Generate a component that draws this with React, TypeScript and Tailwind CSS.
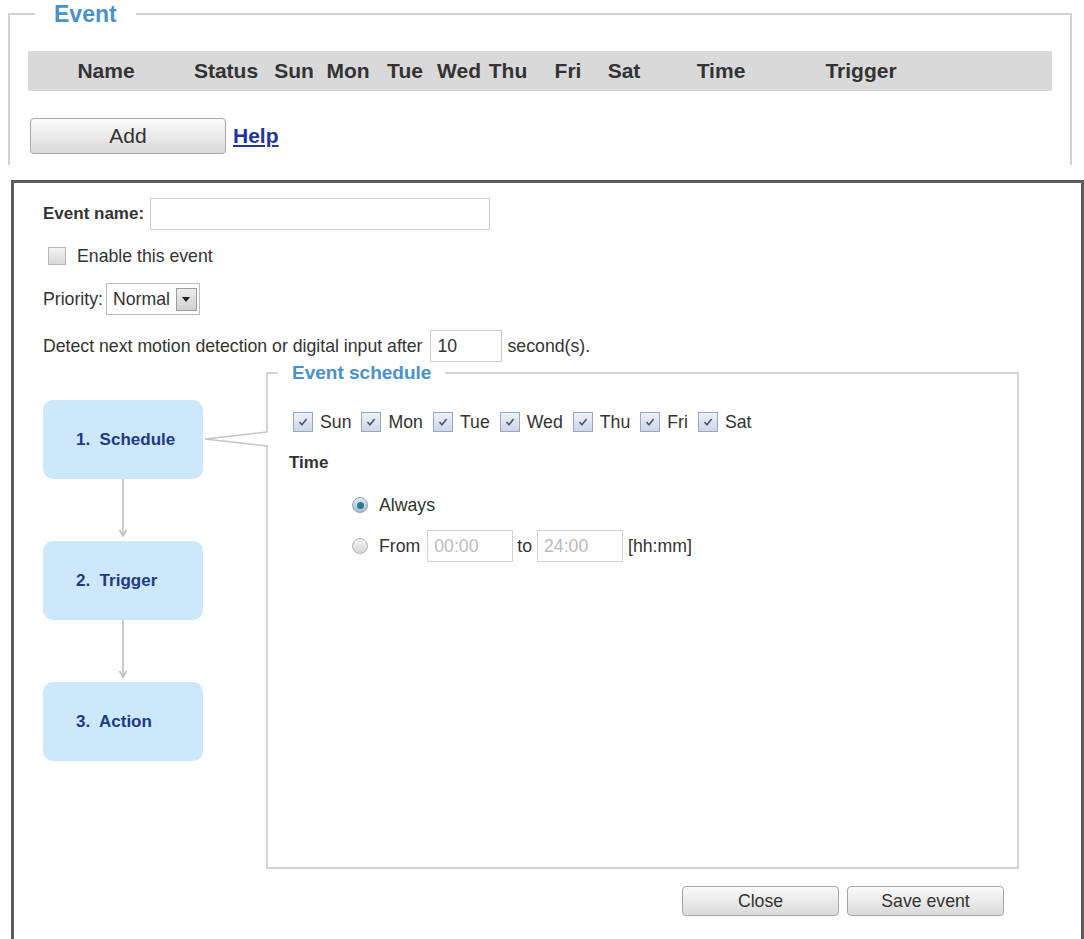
import clsx from "clsx";

const headers = [
	{ label: "Name", w: "w-[156px]" },
	{ label: "Status", w: "w-[84px]" },
	{ label: "Sun", w: "w-[52px]" },
	{ label: "Mon", w: "w-[56px]" },
	{ label: "Tue", w: "w-[58px]" },
	{ label: "Wed", w: "w-[50px]" },
	{ label: "Thu", w: "w-[48px]" },
	{ label: "Fri", w: "w-[72px]" },
	{ label: "Sat", w: "w-[40px]" },
	{ label: "Time", w: "w-[154px]" },
	{ label: "Trigger", w: "w-[126px]" },
];

const days = ["Sun", "Mon", "Tue", "Wed", "Thu", "Fri", "Sat"];

const steps = ["1.  Schedule", "2.  Trigger", "3.  Action"];

const Check = ({ checked, small }: { checked?: boolean; small?: boolean }) => (
	<span
		className={clsx(
			"inline-flex shrink-0 items-center justify-center border",
			small ? "h-[18px] w-[18px]" : "h-[20px] w-[20px]",
			checked
				? "border-[#9ba7be] bg-linear-to-b from-[#eef1f7] to-[#cdd5e5]"
				: "border-[#b7b7b7] bg-linear-to-b from-[#f3f3f3] to-[#d9d9d9]",
		)}
	>
		{checked && (
			<svg viewBox="0 0 12 12" className="h-[12px] w-[12px]">
				<path
					d="M2.5 6.2 L5 8.8 L9.6 3"
					fill="none"
					stroke="#4c5a7c"
					strokeWidth="1.7"
				/>
			</svg>
		)}
	</span>
);

const Radio = ({ checked }: { checked?: boolean }) => (
	<span
		className={clsx(
			"inline-flex h-[16px] w-[16px] shrink-0 items-center justify-center rounded-full border",
			checked
				? "border-[#8fa3b3] bg-linear-to-b from-[#dfe9f0] to-[#a9bccb]"
				: "border-[#b3b3b3] bg-linear-to-b from-[#f5f5f5] to-[#d3d3d3]",
		)}
	>
		{checked && <span className="h-[7px] w-[7px] rounded-full bg-[#2c7b92]" />}
	</span>
);

const Button = ({ children, className }: { children: string; className?: string }) => (
	<button
		type="button"
		className={clsx(
			"flex items-center justify-center rounded-[4px] border border-[#a6a6a6] bg-linear-to-b from-[#fbfbfb] to-[#dadada] text-[#333]",
			className,
		)}
	>
		{children}
	</button>
);

const Arrow = () => (
	<div className="flex h-[62px] justify-center">
		<svg width="12" height="62" viewBox="0 0 12 62">
			<line x1="6" y1="0" x2="6" y2="56" stroke="#bdbdbd" strokeWidth="1.6" />
			<path d="M2.5 51 L6 57 L9.5 51" fill="none" stroke="#bdbdbd" strokeWidth="1.6" />
		</svg>
	</div>
);

export default function App() {
	return (
		<div className="h-[939px] w-[1084px] overflow-hidden bg-white font-['Liberation_Sans',Arial,sans-serif] text-[17.7px] leading-[20px] text-[#333]">
			<fieldset className="ml-[8px] mt-[1px] h-[164px] w-[1064px] border-2 border-b-0 border-[#d2d2d2]">
				<legend className="ml-[25px] px-[19px] text-[23px] font-bold leading-[26px] text-[#4b91ca]">
					Event
				</legend>
				<div className="ml-[18px] mt-[24px] flex h-[40px] w-[1024px] items-center bg-[#d9d9d9] text-[21px] font-bold text-[#333]">
					{headers.map((h) => (
						<div key={h.label} className={clsx("text-center", h.w)}>
							{h.label}
						</div>
					))}
				</div>
				<div className="ml-[20px] mt-[27px] flex items-center">
					<Button className="h-[36px] w-[196px] text-[21px]">Add</Button>
					<a href="#" className="ml-[7px] text-[21px] font-bold text-[#2233a0] underline">
						Help
					</a>
				</div>
			</fieldset>

			<div className="ml-[11px] mt-[15px] h-[759px] w-[1073px] border-[3px] border-b-0 border-[#5c5c5c]">
				<div className="pl-[29px]">
					<div className="mt-[15px] flex h-[32px] items-center">
						<span className="text-[17px] font-bold">Event name:</span>
						<input className="ml-[6px] h-[32px] w-[340px] border border-[#cacaca] outline-none" />
					</div>
					<div className="ml-[5px] mt-[17px] flex h-[18px] items-center">
						<Check small />
						<span className="ml-[11px]">Enable this event</span>
					</div>
					<div className="mt-[18px] flex h-[32px] items-center">
						<span>Priority:</span>
						<div className="ml-[3px] flex h-[32px] w-[94px] items-center border border-[#bcbcbc]">
							<span className="pl-[6px]">Normal</span>
							<span className="ml-auto mr-[2px] flex h-[23px] w-[21px] items-center justify-center border border-[#9c9c9c] bg-linear-to-b from-[#ececec] to-[#cfcfcf]">
								<svg width="8" height="5" viewBox="0 0 8 5">
									<path d="M0 0 H8 L4 5 Z" fill="#222" />
								</svg>
							</span>
						</div>
					</div>
					<div className="mt-[15px] flex h-[32px] items-center">
						<span>Detect next motion detection or digital input after</span>
						<div className="ml-[7px] flex h-[32px] w-[72px] items-center border border-[#cacaca] pl-[7px]">
							10
						</div>
						<span className="ml-[6px]">second(s).</span>
					</div>

					<div className="relative flex">
						<div className="w-[160px] pt-[38px]">
							{steps.map((s, i) => (
								<div key={s}>
									{i > 0 && <Arrow />}
									<div className="flex h-[79px] items-center rounded-[10px] bg-[#cde8fa] pl-[33px] text-[17px] font-bold whitespace-pre text-[#203a85]">
										{s}
									</div>
								</div>
							))}
						</div>

						<svg
							className="absolute left-[160px] top-[63px] z-10"
							width="68"
							height="28"
							viewBox="0 0 68 28"
						>
							<rect x="61" y="7.5" width="6" height="13" fill="#fff" />
							<path d="M64 7 L2 14 L64 21" fill="none" stroke="#c6c6c6" strokeWidth="1.6" />
						</svg>

						<fieldset className="ml-[63px] h-[507px] w-[753px] border-2 border-[#d4d4d4]">
							<legend className="ml-[10px] px-[14px] text-[19px] font-bold leading-[22px] text-[#4b91ca]">
								Event schedule
							</legend>
							<div className="ml-[25px] mt-[28px] flex h-[20px] items-center">
								{days.map((d) => (
									<div key={d} className="mr-[10px] flex items-center">
										<Check checked />
										<span className="ml-[7px]">{d}</span>
									</div>
								))}
							</div>
							<div className="ml-[21px] mt-[21px] text-[17px] font-bold">Time</div>
							<div className="ml-[84px] mt-[22px] flex h-[20px] items-center">
								<Radio checked />
								<span className="ml-[11px]">Always</span>
							</div>
							<div className="ml-[84px] mt-[15px] flex h-[32px] items-center">
								<Radio />
								<span className="ml-[11px]">From</span>
								<div className="ml-[7px] flex h-[32px] w-[86px] items-center border border-[#d2d2d2] pl-[6px] text-[#bbbbbb]">
									00:00
								</div>
								<span className="ml-[4px]">to</span>
								<div className="ml-[5px] flex h-[32px] w-[86px] items-center border border-[#d2d2d2] pl-[6px] text-[#bbbbbb]">
									24:00
								</div>
								<span className="ml-[5px]">[hh:mm]</span>
							</div>
						</fieldset>
					</div>

					<div className="ml-[639px] mt-[17px] flex gap-[8px]">
						<Button className="h-[30px] w-[157px]">Close</Button>
						<Button className="h-[30px] w-[157px]">Save event</Button>
					</div>
				</div>
			</div>
		</div>
	);
}
